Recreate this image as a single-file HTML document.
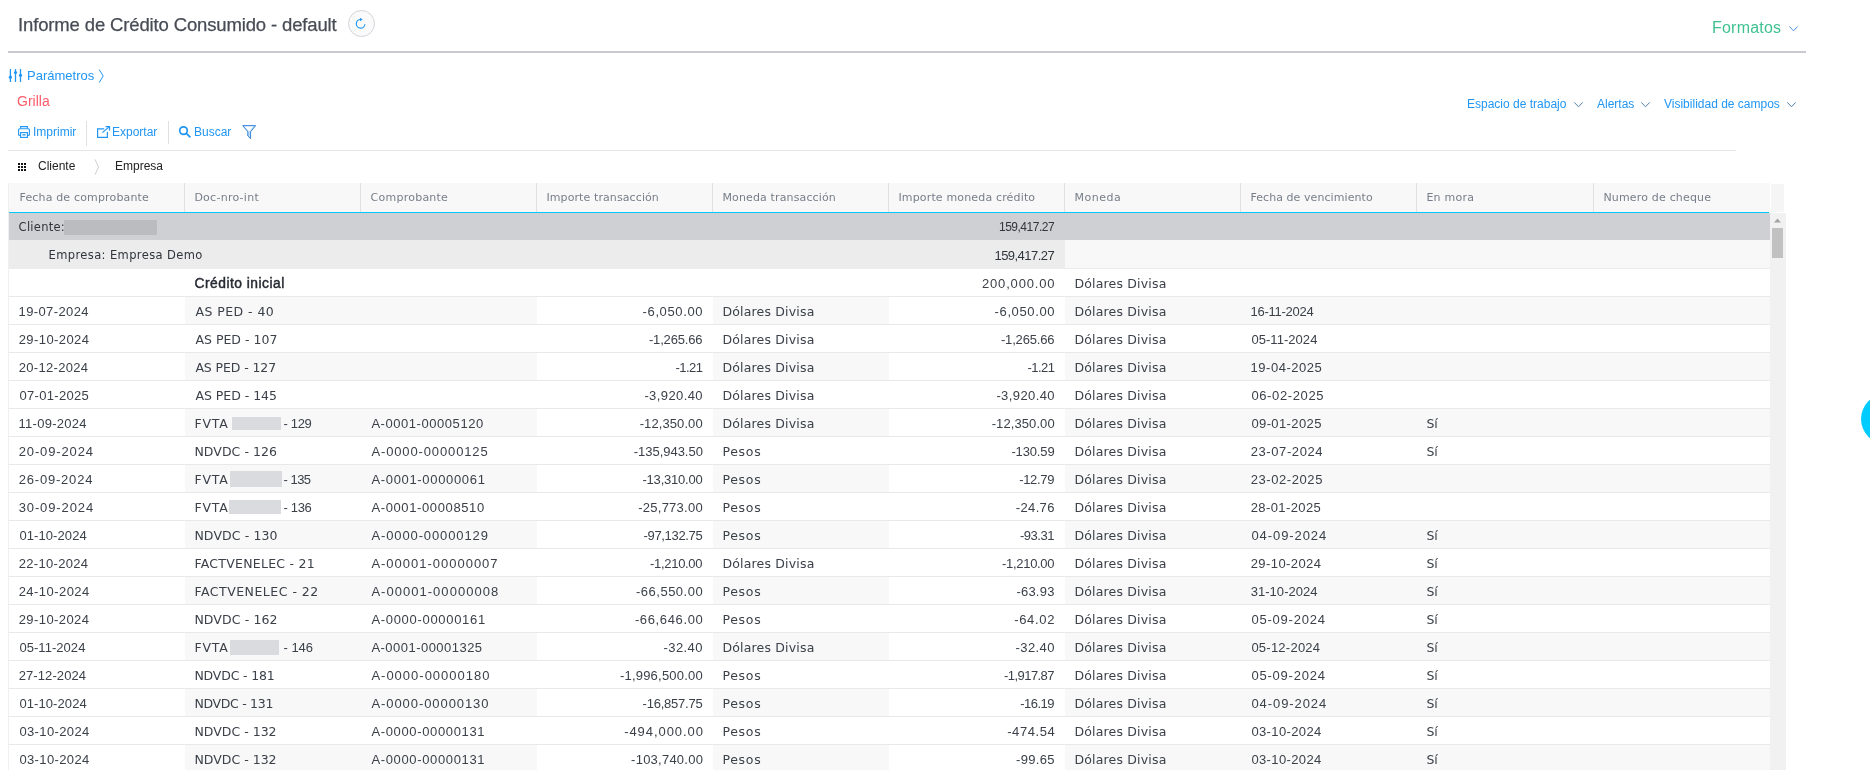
<!DOCTYPE html>
<html lang="es">
<head>
<meta charset="utf-8">
<title>Informe de Crédito Consumido - default</title>
<style>
html,body{margin:0;padding:0;background:#fff;}
body{width:1870px;height:770px;overflow:hidden;position:relative;will-change:transform;font-family:"Liberation Sans",sans-serif;color:#333;}
.abs{position:absolute;white-space:nowrap;}
svg.abs{overflow:visible;}
.title{left:18px;top:13px;font-size:18.5px;line-height:24px;color:#474c55;letter-spacing:-0.14px;-webkit-text-stroke:0.25px #474c55;}
.refresh{left:348px;top:10px;width:25px;height:25px;border:1px solid #d3d4da;border-radius:50%;background:#fafafa;}
.formatos{left:1712px;top:17px;font-size:16px;line-height:22px;color:#3fc191;letter-spacing:0.22px;}
.hr{left:8px;top:51px;width:1798px;height:2px;background:#c9c9d1;}
.link{color:#2196f3;font-size:12px;line-height:16px;}
.grilla{left:17px;top:93px;font-size:14px;line-height:16px;color:#fa5c6a;}
.sep{width:1px;background:#e0e0e0;}
.line2{left:8px;top:150px;width:1728px;height:1px;background:#e6e6e6;}
.gp{font-size:12px;line-height:16px;color:#222;}
.t{position:absolute;white-space:nowrap;line-height:20px;}
.f0{font-family:"DejaVu Sans","Liberation Sans",sans-serif;font-size:11px;color:#777e89;}
.f1{font-family:"DejaVu Sans","Liberation Sans",sans-serif;font-size:11.5px;color:#30343c;}
.f2{font-family:"Liberation Sans",sans-serif;font-size:12px;color:#30343c;}
.f3{font-family:"Liberation Sans",sans-serif;font-size:13px;color:#30343c;}
.f4{font-family:"Liberation Sans",sans-serif;font-size:13.8px;color:#262a32;}
.f5{font-family:"Liberation Sans",sans-serif;font-size:13px;color:#3b4049;}
.f6{font-family:"DejaVu Sans","Liberation Sans",sans-serif;font-size:12.5px;color:#3b4049;}
.rl{left:9px;width:1761px;height:1px;background:#e9e9e9;}
.sh{height:27px;background:#f8f8f8;}
.sb{left:1770px;top:213px;width:15.7px;height:557px;background:#f1f1f1;}
.bubble{left:1861px;top:394px;width:50px;height:50px;border-radius:50%;background:#00ccff;}
</style>
</head>
<body>
<div class="abs title">Informe de Crédito Consumido - default</div>
<div class="abs refresh"></div>
<svg class="abs" style="left:348px;top:10px" width="27" height="27" viewBox="0 0 27 27"><path d="M16.9 14.2 A4.3 4.3 0 1 1 12.6 9.5" fill="none" stroke="#2196f3" stroke-width="1.2"/><path d="M12 7.7 L14.7 9.6 L12 11.3 Z" fill="#2196f3"/></svg>
<div class="abs formatos">Formatos</div>
<svg class="abs" style="left:1789px;top:26px" width="9" height="6" viewBox="0 0 9 6"><path d="M0.3 0.4 L4.5 4.8 L8.7 0.4" fill="none" stroke="#4a90e2" stroke-width="1"/></svg>
<div class="abs hr"></div>
<svg class="abs" style="left:8px;top:68px" width="16" height="16" viewBox="0 0 16 16"><g stroke="#2196f3" stroke-width="1.3" fill="none"><path d="M2.4 1 V14 M7.5 1 V14 M12.5 1 V14"/></g><g fill="#2196f3"><circle cx="2.4" cy="9.2" r="1.6"/><circle cx="7.5" cy="4.5" r="1.6"/><circle cx="12.5" cy="7.3" r="1.6"/></g></svg>
<div class="abs link" style="left:27px;top:68px;font-size:13px;">Parámetros</div>
<svg class="abs" style="left:98px;top:69px" width="7" height="15" viewBox="0 0 7 15"><path d="M1.2 0.6 L5.2 7 L1.2 13.6" fill="none" stroke="#2196f3" stroke-width="1"/></svg>
<div class="abs grilla">Grilla</div>
<div class="abs link" style="left:1467px;top:96px;">Espacio de trabajo</div>
<svg class="abs" style="left:1574px;top:102px" width="9" height="6" viewBox="0 0 9 6"><path d="M0.3 0.4 L4.5 4.8 L8.7 0.4" fill="none" stroke="#4f7fae" stroke-width="1"/></svg>
<div class="abs link" style="left:1597px;top:96px;">Alertas</div>
<svg class="abs" style="left:1641px;top:102px" width="9" height="6" viewBox="0 0 9 6"><path d="M0.3 0.4 L4.5 4.8 L8.7 0.4" fill="none" stroke="#4f7fae" stroke-width="1"/></svg>
<div class="abs link" style="left:1664px;top:96px;">Visibilidad de campos</div>
<svg class="abs" style="left:1787px;top:102px" width="9" height="6" viewBox="0 0 9 6"><path d="M0.3 0.4 L4.5 4.8 L8.7 0.4" fill="none" stroke="#4f7fae" stroke-width="1"/></svg>
<svg class="abs" style="left:18px;top:126px" width="12" height="12" viewBox="0 0 12 12"><g fill="none" stroke="#2196f3" stroke-width="1.1"><path d="M2.6 2.6 V0.6 H9.4 V2.6"/><rect x="0.6" y="2.8" width="10.8" height="6.6" rx="1"/><rect x="2.6" y="6.6" width="6.8" height="4.8" fill="#fff"/></g><rect x="4.4" y="8.2" width="3.2" height="1.3" fill="#2196f3"/></svg>
<div class="abs link" style="left:33px;top:124px;">Imprimir</div>
<div class="abs sep" style="left:86px;top:121px;height:25px;"></div>
<svg class="abs" style="left:97px;top:126px" width="13" height="12" viewBox="0 0 13 12"><g fill="none" stroke="#2196f3" stroke-width="1.2"><path d="M7.2 2.9 H0.6 V11.4 H10.4 V6"/><path d="M5.4 6.6 L12.4 0.6"/><path d="M8.6 0.6 H12.5 V4.4"/></g></svg>
<div class="abs link" style="left:112px;top:124px;">Exportar</div>
<div class="abs sep" style="left:168px;top:121px;height:23px;"></div>
<svg class="abs" style="left:178px;top:125px" width="14" height="14" viewBox="0 0 14 14"><g fill="none" stroke="#2196f3" stroke-width="1.7"><circle cx="5.5" cy="5.6" r="3.8"/><path d="M8.3 8.4 L12.4 12.4"/></g></svg>
<div class="abs link" style="left:194px;top:124px;">Buscar</div>
<svg class="abs" style="left:242px;top:125px" width="14" height="14" viewBox="0 0 14 14"><path d="M0.7 0.6 H13.6 L8.6 6.8 V13.6 L5.8 11 V6.8 Z" fill="#b9d9f6" stroke="#3587dc" stroke-width="1"/><path d="M2.6 1.4 H11.4 L7.1 6.6 Z" fill="#fff"/></svg>
<div class="abs line2"></div>
<svg class="abs" style="left:18px;top:163px" width="8" height="8" viewBox="0 0 8 8"><g fill="#111"><rect x="0" y="0" width="2" height="2"/><rect x="3" y="0" width="2" height="2"/><rect x="6" y="0" width="2" height="2"/><rect x="0" y="3" width="2" height="2"/><rect x="3" y="3" width="2" height="2"/><rect x="6" y="3" width="2" height="2"/><rect x="0" y="6" width="2" height="2"/><rect x="3" y="6" width="2" height="2"/><rect x="6" y="6" width="2" height="2"/></g></svg>
<div class="abs gp" style="left:38px;top:158px;">Cliente</div>
<svg class="abs" style="left:94px;top:159px" width="6" height="16" viewBox="0 0 6 16"><path d="M1 0.4 L4.6 8 L1 15.6" fill="none" stroke="#cfcfcf" stroke-width="1"/></svg>
<div class="abs gp" style="left:115px;top:158px;">Empresa</div>

<div class="abs" style="left:8px;top:183px;width:1px;height:587px;background:#efefef"></div>
<div class="abs" style="left:9px;top:183px;width:1761px;height:29px;background:#f8f8f8"></div>
<div class="abs" style="left:9px;top:212px;width:1760px;height:1px;background:#06c8fa"></div>
<div class="abs" style="left:184px;top:183px;width:1px;height:29px;background:#e1e1e1"></div>
<div class="abs" style="left:360px;top:183px;width:1px;height:29px;background:#e1e1e1"></div>
<div class="abs" style="left:536px;top:183px;width:1px;height:29px;background:#e1e1e1"></div>
<div class="abs" style="left:712px;top:183px;width:1px;height:29px;background:#e1e1e1"></div>
<div class="abs" style="left:888px;top:183px;width:1px;height:29px;background:#e1e1e1"></div>
<div class="abs" style="left:1064px;top:183px;width:1px;height:29px;background:#e1e1e1"></div>
<div class="abs" style="left:1240px;top:183px;width:1px;height:29px;background:#e1e1e1"></div>
<div class="abs" style="left:1416px;top:183px;width:1px;height:29px;background:#e1e1e1"></div>
<div class="abs" style="left:1593px;top:183px;width:1px;height:29px;background:#e1e1e1"></div>
<div class="abs" style="left:9px;top:213px;width:1761px;height:27px;background:#cfd0d4"></div>
<div class="abs" style="left:64px;top:220px;width:93px;height:15px;background:#bbbcc0"></div>
<div class="abs" style="left:9px;top:240px;width:1056px;height:29px;background:#ececec"></div>
<div class="abs" style="left:1065px;top:240px;width:705px;height:28px;background:#f8f8f8;border-bottom:1px solid #ebebeb"></div>
<div class="abs rl" style="top:296px"></div>
<div class="abs rl" style="top:324px"></div>
<div class="abs sh" style="left:185px;top:297px;width:352px"></div>
<div class="abs sh" style="left:713px;top:297px;width:176px"></div>
<div class="abs sh" style="left:1065px;top:297px;width:705px"></div>
<div class="abs rl" style="top:352px"></div>
<div class="abs rl" style="top:380px"></div>
<div class="abs sh" style="left:185px;top:353px;width:352px"></div>
<div class="abs sh" style="left:713px;top:353px;width:176px"></div>
<div class="abs sh" style="left:1065px;top:353px;width:705px"></div>
<div class="abs rl" style="top:408px"></div>
<div class="abs rl" style="top:436px"></div>
<div class="abs sh" style="left:185px;top:409px;width:352px"></div>
<div class="abs sh" style="left:713px;top:409px;width:176px"></div>
<div class="abs sh" style="left:1065px;top:409px;width:705px"></div>
<div class="abs rl" style="top:464px"></div>
<div class="abs rl" style="top:492px"></div>
<div class="abs sh" style="left:185px;top:465px;width:352px"></div>
<div class="abs sh" style="left:713px;top:465px;width:176px"></div>
<div class="abs sh" style="left:1065px;top:465px;width:705px"></div>
<div class="abs rl" style="top:520px"></div>
<div class="abs rl" style="top:548px"></div>
<div class="abs sh" style="left:185px;top:521px;width:352px"></div>
<div class="abs sh" style="left:713px;top:521px;width:176px"></div>
<div class="abs sh" style="left:1065px;top:521px;width:705px"></div>
<div class="abs rl" style="top:576px"></div>
<div class="abs rl" style="top:604px"></div>
<div class="abs sh" style="left:185px;top:577px;width:352px"></div>
<div class="abs sh" style="left:713px;top:577px;width:176px"></div>
<div class="abs sh" style="left:1065px;top:577px;width:705px"></div>
<div class="abs rl" style="top:632px"></div>
<div class="abs rl" style="top:660px"></div>
<div class="abs sh" style="left:185px;top:633px;width:352px"></div>
<div class="abs sh" style="left:713px;top:633px;width:176px"></div>
<div class="abs sh" style="left:1065px;top:633px;width:705px"></div>
<div class="abs rl" style="top:688px"></div>
<div class="abs rl" style="top:716px"></div>
<div class="abs sh" style="left:185px;top:689px;width:352px"></div>
<div class="abs sh" style="left:713px;top:689px;width:176px"></div>
<div class="abs sh" style="left:1065px;top:689px;width:705px"></div>
<div class="abs rl" style="top:744px"></div>
<div class="abs rl" style="top:772px"></div>
<div class="abs sh" style="left:185px;top:745px;width:352px"></div>
<div class="abs sh" style="left:713px;top:745px;width:176px"></div>
<div class="abs sh" style="left:1065px;top:745px;width:705px"></div>
<div class="abs" style="left:232.0px;top:417.2px;width:49.0px;height:12.6px;background:#dadbdf"></div>
<div class="abs" style="left:230.2px;top:471.0px;width:51.5px;height:15.6px;background:#dadbdf"></div>
<div class="abs" style="left:229.0px;top:500.0px;width:51.6px;height:14.0px;background:#dadbdf"></div>
<div class="abs" style="left:230.2px;top:640.0px;width:48.8px;height:14.6px;background:#dadbdf"></div>
<span class="t f0" style="left:19.5px;top:188px;letter-spacing:0.16px;">Fecha de comprobante</span>
<span class="t f0" style="left:194.4px;top:188px;letter-spacing:0.26px;">Doc-nro-int</span>
<span class="t f0" style="left:370.6px;top:188px;letter-spacing:0.24px;">Comprobante</span>
<span class="t f0" style="left:546.4px;top:188px;letter-spacing:0.1px;">Importe transacción</span>
<span class="t f0" style="left:722.4px;top:188px;letter-spacing:0.14px;">Moneda transacción</span>
<span class="t f0" style="left:898.4px;top:188px;letter-spacing:0.16px;">Importe moneda crédito</span>
<span class="t f0" style="left:1074.4px;top:188px;letter-spacing:0.55px;">Moneda</span>
<span class="t f0" style="left:1250.4px;top:188px;letter-spacing:0.07px;">Fecha de vencimiento</span>
<span class="t f0" style="left:1426.4px;top:188px;letter-spacing:0.23px;">En mora</span>
<span class="t f0" style="left:1603.4px;top:188px;letter-spacing:0.18px;">Numero de cheque</span>
<span class="t f1" style="left:18.6px;top:217px;letter-spacing:0.27px;">Cliente:</span>
<span class="t f2" style="left:999.0px;top:217px;letter-spacing:-0.5px;">159,417.27</span>
<span class="t f1" style="left:48.5px;top:245px;letter-spacing:0.39px;">Empresa: Empresa Demo</span>
<span class="t f3" style="left:994.5px;top:246px;letter-spacing:-0.55px;">159,417.27</span>
<span class="t f4" style="left:194.5px;top:274px;letter-spacing:0.5px;-webkit-text-stroke:0.45px #262a32;">Crédito inicial</span>
<span class="t f5" style="left:981.9px;top:274px;letter-spacing:0.85px;">200,000.00</span>
<span class="t f6" style="left:1074.4px;top:274px;letter-spacing:0.18px;">Dólares Divisa</span>
<span class="t f5" style="left:18.5px;top:302px;letter-spacing:0.4px;">19-07-2024</span>
<span class="t f6" style="left:195.4px;top:302px;letter-spacing:0.45px;">AS PED - 40</span>
<span class="t f5" style="left:642.6px;top:302px;letter-spacing:0.62px;">-6,050.00</span>
<span class="t f6" style="left:722.4px;top:302px;letter-spacing:0.18px;">Dólares Divisa</span>
<span class="t f5" style="left:994.6px;top:302px;letter-spacing:0.62px;">-6,050.00</span>
<span class="t f6" style="left:1074.4px;top:302px;letter-spacing:0.18px;">Dólares Divisa</span>
<span class="t f5" style="left:1250.5px;top:302px;letter-spacing:-0.25px;">16-11-2024</span>
<span class="t f5" style="left:18.7px;top:330px;letter-spacing:0.42px;">29-10-2024</span>
<span class="t f6" style="left:195.4px;top:330px;letter-spacing:0.01px;">AS PED - 107</span>
<span class="t f5" style="left:648.9px;top:330px;letter-spacing:-0.16px;">-1,265.66</span>
<span class="t f6" style="left:722.4px;top:330px;letter-spacing:0.18px;">Dólares Divisa</span>
<span class="t f5" style="left:1000.9px;top:330px;letter-spacing:-0.16px;">-1,265.66</span>
<span class="t f6" style="left:1074.4px;top:330px;letter-spacing:0.18px;">Dólares Divisa</span>
<span class="t f5" style="left:1251.4px;top:330px;letter-spacing:0.05px;">05-11-2024</span>
<span class="t f5" style="left:18.7px;top:358px;letter-spacing:0.32px;">20-12-2024</span>
<span class="t f6" style="left:195.4px;top:358px;letter-spacing:-0.1px;">AS PED - 127</span>
<span class="t f5" style="left:675.6px;top:358px;letter-spacing:-0.55px;">-1.21</span>
<span class="t f6" style="left:722.4px;top:358px;letter-spacing:0.18px;">Dólares Divisa</span>
<span class="t f5" style="left:1027.6px;top:358px;letter-spacing:-0.55px;">-1.21</span>
<span class="t f6" style="left:1074.4px;top:358px;letter-spacing:0.18px;">Dólares Divisa</span>
<span class="t f5" style="left:1250.5px;top:358px;letter-spacing:0.53px;">19-04-2025</span>
<span class="t f5" style="left:19.4px;top:386px;letter-spacing:0.32px;">07-01-2025</span>
<span class="t f6" style="left:195.4px;top:386px;letter-spacing:-0.02px;">AS PED - 145</span>
<span class="t f5" style="left:644.4px;top:386px;letter-spacing:0.4px;">-3,920.40</span>
<span class="t f6" style="left:722.4px;top:386px;letter-spacing:0.18px;">Dólares Divisa</span>
<span class="t f5" style="left:996.4px;top:386px;letter-spacing:0.4px;">-3,920.40</span>
<span class="t f6" style="left:1074.4px;top:386px;letter-spacing:0.18px;">Dólares Divisa</span>
<span class="t f5" style="left:1251.4px;top:386px;letter-spacing:0.63px;">06-02-2025</span>
<span class="t f5" style="left:18.5px;top:414px;letter-spacing:0.27px;">11-09-2024</span>
<span class="t f6" style="left:194.5px;top:414px;letter-spacing:0.8px;">FVTA</span>
<span class="t f5" style="left:283.6px;top:414px;letter-spacing:-0.35px;">- 129</span>
<span class="t f5" style="left:371.4px;top:414px;letter-spacing:0.55px;">A-0001-00005120</span>
<span class="t f5" style="left:639.7px;top:414px;letter-spacing:0.09px;">-12,350.00</span>
<span class="t f6" style="left:722.4px;top:414px;letter-spacing:0.18px;">Dólares Divisa</span>
<span class="t f5" style="left:991.7px;top:414px;letter-spacing:0.09px;">-12,350.00</span>
<span class="t f6" style="left:1074.4px;top:414px;letter-spacing:0.18px;">Dólares Divisa</span>
<span class="t f5" style="left:1251.4px;top:414px;letter-spacing:0.39px;">09-01-2025</span>
<span class="t f6" style="left:1426.6px;top:414px;letter-spacing:-0.28px;">Sí</span>
<span class="t f5" style="left:18.7px;top:442px;letter-spacing:0.87px;">20-09-2024</span>
<span class="t f6" style="left:194.4px;top:442px;letter-spacing:0.06px;">NDVDC - 126</span>
<span class="t f5" style="left:371.4px;top:442px;letter-spacing:0.87px;">A-0000-00000125</span>
<span class="t f5" style="left:633.7px;top:442px;letter-spacing:-0.02px;">-135,943.50</span>
<span class="t f6" style="left:722.4px;top:442px;letter-spacing:0.7px;">Pesos</span>
<span class="t f5" style="left:1011.4px;top:442px;letter-spacing:-0.14px;">-130.59</span>
<span class="t f6" style="left:1074.4px;top:442px;letter-spacing:0.18px;">Dólares Divisa</span>
<span class="t f5" style="left:1250.7px;top:442px;letter-spacing:0.59px;">23-07-2024</span>
<span class="t f6" style="left:1426.6px;top:442px;letter-spacing:-0.28px;">Sí</span>
<span class="t f5" style="left:18.7px;top:470px;letter-spacing:0.8px;">26-09-2024</span>
<span class="t f6" style="left:194.5px;top:470px;letter-spacing:0.8px;">FVTA</span>
<span class="t f5" style="left:283.6px;top:470px;letter-spacing:-0.53px;">- 135</span>
<span class="t f5" style="left:371.4px;top:470px;letter-spacing:0.67px;">A-0001-00000061</span>
<span class="t f5" style="left:642.5px;top:470px;letter-spacing:-0.22px;">-13,310.00</span>
<span class="t f6" style="left:722.4px;top:470px;letter-spacing:0.7px;">Pesos</span>
<span class="t f5" style="left:1019.2px;top:470px;letter-spacing:-0.33px;">-12.79</span>
<span class="t f6" style="left:1074.4px;top:470px;letter-spacing:0.18px;">Dólares Divisa</span>
<span class="t f5" style="left:1250.7px;top:470px;letter-spacing:0.58px;">23-02-2025</span>
<span class="t f5" style="left:18.7px;top:498px;letter-spacing:0.88px;">30-09-2024</span>
<span class="t f6" style="left:194.5px;top:498px;letter-spacing:0.8px;">FVTA</span>
<span class="t f5" style="left:283.6px;top:498px;letter-spacing:-0.35px;">- 136</span>
<span class="t f5" style="left:371.4px;top:498px;letter-spacing:0.62px;">A-0001-00008510</span>
<span class="t f5" style="left:638.2px;top:498px;letter-spacing:0.26px;">-25,773.00</span>
<span class="t f6" style="left:722.4px;top:498px;letter-spacing:0.7px;">Pesos</span>
<span class="t f5" style="left:1015.8px;top:498px;letter-spacing:0.35px;">-24.76</span>
<span class="t f6" style="left:1074.4px;top:498px;letter-spacing:0.18px;">Dólares Divisa</span>
<span class="t f5" style="left:1250.7px;top:498px;letter-spacing:0.4px;">28-01-2025</span>
<span class="t f5" style="left:19.4px;top:526px;letter-spacing:0.09px;">01-10-2024</span>
<span class="t f6" style="left:194.4px;top:526px;letter-spacing:0.12px;">NDVDC - 130</span>
<span class="t f5" style="left:371.4px;top:526px;letter-spacing:0.89px;">A-0000-00000129</span>
<span class="t f5" style="left:643.5px;top:526px;letter-spacing:-0.33px;">-97,132.75</span>
<span class="t f6" style="left:722.4px;top:526px;letter-spacing:0.7px;">Pesos</span>
<span class="t f5" style="left:1019.9px;top:526px;letter-spacing:-0.47px;">-93.31</span>
<span class="t f6" style="left:1074.4px;top:526px;letter-spacing:0.18px;">Dólares Divisa</span>
<span class="t f5" style="left:1251.4px;top:526px;letter-spacing:0.93px;">04-09-2024</span>
<span class="t f6" style="left:1426.6px;top:526px;letter-spacing:-0.28px;">Sí</span>
<span class="t f5" style="left:18.7px;top:554px;letter-spacing:0.32px;">22-10-2024</span>
<span class="t f6" style="left:194.4px;top:554px;letter-spacing:0.26px;">FACTVENELEC - 21</span>
<span class="t f5" style="left:371.4px;top:554px;letter-spacing:0.99px;">A-00001-00000007</span>
<span class="t f5" style="left:650.0px;top:554px;letter-spacing:-0.3px;">-1,210.00</span>
<span class="t f6" style="left:722.4px;top:554px;letter-spacing:0.18px;">Dólares Divisa</span>
<span class="t f5" style="left:1002.0px;top:554px;letter-spacing:-0.3px;">-1,210.00</span>
<span class="t f6" style="left:1074.4px;top:554px;letter-spacing:0.18px;">Dólares Divisa</span>
<span class="t f5" style="left:1250.7px;top:554px;letter-spacing:0.42px;">29-10-2024</span>
<span class="t f6" style="left:1426.6px;top:554px;letter-spacing:-0.28px;">Sí</span>
<span class="t f5" style="left:18.7px;top:582px;letter-spacing:0.45px;">24-10-2024</span>
<span class="t f6" style="left:194.4px;top:582px;letter-spacing:0.5px;">FACTVENELEC - 22</span>
<span class="t f5" style="left:371.4px;top:582px;letter-spacing:1.03px;">A-00001-00000008</span>
<span class="t f5" style="left:636.0px;top:582px;letter-spacing:0.5px;">-66,550.00</span>
<span class="t f6" style="left:722.4px;top:582px;letter-spacing:0.7px;">Pesos</span>
<span class="t f5" style="left:1016.4px;top:582px;letter-spacing:0.23px;">-63.93</span>
<span class="t f6" style="left:1074.4px;top:582px;letter-spacing:0.18px;">Dólares Divisa</span>
<span class="t f5" style="left:1250.7px;top:582px;letter-spacing:0.04px;">31-10-2024</span>
<span class="t f6" style="left:1426.6px;top:582px;letter-spacing:-0.28px;">Sí</span>
<span class="t f5" style="left:18.7px;top:610px;letter-spacing:0.42px;">29-10-2024</span>
<span class="t f6" style="left:194.4px;top:610px;letter-spacing:0.11px;">NDVDC - 162</span>
<span class="t f5" style="left:371.4px;top:610px;letter-spacing:0.69px;">A-0000-00000161</span>
<span class="t f5" style="left:634.9px;top:610px;letter-spacing:0.63px;">-66,646.00</span>
<span class="t f6" style="left:722.4px;top:610px;letter-spacing:0.7px;">Pesos</span>
<span class="t f5" style="left:1014.2px;top:610px;letter-spacing:0.67px;">-64.02</span>
<span class="t f6" style="left:1074.4px;top:610px;letter-spacing:0.18px;">Dólares Divisa</span>
<span class="t f5" style="left:1251.4px;top:610px;letter-spacing:0.79px;">05-09-2024</span>
<span class="t f6" style="left:1426.6px;top:610px;letter-spacing:-0.28px;">Sí</span>
<span class="t f5" style="left:19.4px;top:638px;letter-spacing:0.05px;">05-11-2024</span>
<span class="t f6" style="left:194.5px;top:638px;letter-spacing:0.8px;">FVTA</span>
<span class="t f5" style="left:283.6px;top:638px;letter-spacing:-0.05px;">- 146</span>
<span class="t f5" style="left:371.4px;top:638px;letter-spacing:0.47px;">A-0001-00001325</span>
<span class="t f5" style="left:663.5px;top:638px;letter-spacing:0.41px;">-32.40</span>
<span class="t f6" style="left:722.4px;top:638px;letter-spacing:0.18px;">Dólares Divisa</span>
<span class="t f5" style="left:1015.5px;top:638px;letter-spacing:0.41px;">-32.40</span>
<span class="t f6" style="left:1074.4px;top:638px;letter-spacing:0.18px;">Dólares Divisa</span>
<span class="t f5" style="left:1251.4px;top:638px;letter-spacing:0.24px;">05-12-2024</span>
<span class="t f6" style="left:1426.6px;top:638px;letter-spacing:-0.28px;">Sí</span>
<span class="t f5" style="left:18.7px;top:666px;letter-spacing:0.1px;">27-12-2024</span>
<span class="t f6" style="left:194.4px;top:666px;letter-spacing:-0.17px;">NDVDC - 181</span>
<span class="t f5" style="left:371.4px;top:666px;letter-spacing:1.0px;">A-0000-00000180</span>
<span class="t f5" style="left:619.9px;top:666px;letter-spacing:0.22px;">-1,996,500.00</span>
<span class="t f6" style="left:722.4px;top:666px;letter-spacing:0.7px;">Pesos</span>
<span class="t f5" style="left:1004.0px;top:666px;letter-spacing:-0.55px;">-1,917.87</span>
<span class="t f6" style="left:1074.4px;top:666px;letter-spacing:0.18px;">Dólares Divisa</span>
<span class="t f5" style="left:1251.4px;top:666px;letter-spacing:0.79px;">05-09-2024</span>
<span class="t f6" style="left:1426.6px;top:666px;letter-spacing:-0.28px;">Sí</span>
<span class="t f5" style="left:19.4px;top:694px;letter-spacing:0.09px;">01-10-2024</span>
<span class="t f6" style="left:194.4px;top:694px;letter-spacing:-0.3px;">NDVDC - 131</span>
<span class="t f5" style="left:371.4px;top:694px;letter-spacing:0.93px;">A-0000-00000130</span>
<span class="t f5" style="left:642.6px;top:694px;letter-spacing:-0.23px;">-16,857.75</span>
<span class="t f6" style="left:722.4px;top:694px;letter-spacing:0.7px;">Pesos</span>
<span class="t f5" style="left:1020.3px;top:694px;letter-spacing:-0.55px;">-16.19</span>
<span class="t f6" style="left:1074.4px;top:694px;letter-spacing:0.18px;">Dólares Divisa</span>
<span class="t f5" style="left:1251.4px;top:694px;letter-spacing:0.93px;">04-09-2024</span>
<span class="t f6" style="left:1426.6px;top:694px;letter-spacing:-0.28px;">Sí</span>
<span class="t f5" style="left:19.4px;top:722px;letter-spacing:0.37px;">03-10-2024</span>
<span class="t f6" style="left:194.4px;top:722px;letter-spacing:0.02px;">NDVDC - 132</span>
<span class="t f5" style="left:371.4px;top:722px;letter-spacing:0.65px;">A-0000-00000131</span>
<span class="t f5" style="left:624.2px;top:722px;letter-spacing:0.93px;">-494,000.00</span>
<span class="t f6" style="left:722.4px;top:722px;letter-spacing:0.7px;">Pesos</span>
<span class="t f5" style="left:1007.2px;top:722px;letter-spacing:0.57px;">-474.54</span>
<span class="t f6" style="left:1074.4px;top:722px;letter-spacing:0.18px;">Dólares Divisa</span>
<span class="t f5" style="left:1251.4px;top:722px;letter-spacing:0.37px;">03-10-2024</span>
<span class="t f6" style="left:1426.6px;top:722px;letter-spacing:-0.28px;">Sí</span>
<span class="t f5" style="left:19.4px;top:750px;letter-spacing:0.37px;">03-10-2024</span>
<span class="t f6" style="left:194.4px;top:750px;letter-spacing:0.02px;">NDVDC - 132</span>
<span class="t f5" style="left:371.4px;top:750px;letter-spacing:0.65px;">A-0000-00000131</span>
<span class="t f5" style="left:631.1px;top:750px;letter-spacing:0.24px;">-103,740.00</span>
<span class="t f6" style="left:722.4px;top:750px;letter-spacing:0.7px;">Pesos</span>
<span class="t f5" style="left:1016.1px;top:750px;letter-spacing:0.29px;">-99.65</span>
<span class="t f6" style="left:1074.4px;top:750px;letter-spacing:0.18px;">Dólares Divisa</span>
<span class="t f5" style="left:1251.4px;top:750px;letter-spacing:0.37px;">03-10-2024</span>
<span class="t f6" style="left:1426.6px;top:750px;letter-spacing:-0.28px;">Sí</span>
<div class="abs" style="left:1770px;top:183px;width:15px;height:30px;background:#fff"></div>
<div class="abs" style="left:1771px;top:184px;width:13px;height:28px;background:#f5f5f5"></div>
<div class="abs sb"></div>
<svg class="abs" style="left:1770px;top:213px" width="15" height="15" viewBox="0 0 15 15"><path d="M4 9.6 L7.5 5.6 L11 9.6 Z" fill="#a3a3a3"/></svg>
<div class="abs" style="left:1772px;top:228px;width:11px;height:30px;background:#c1c1c1"></div>
<div class="abs bubble"></div>
</body>
</html>
